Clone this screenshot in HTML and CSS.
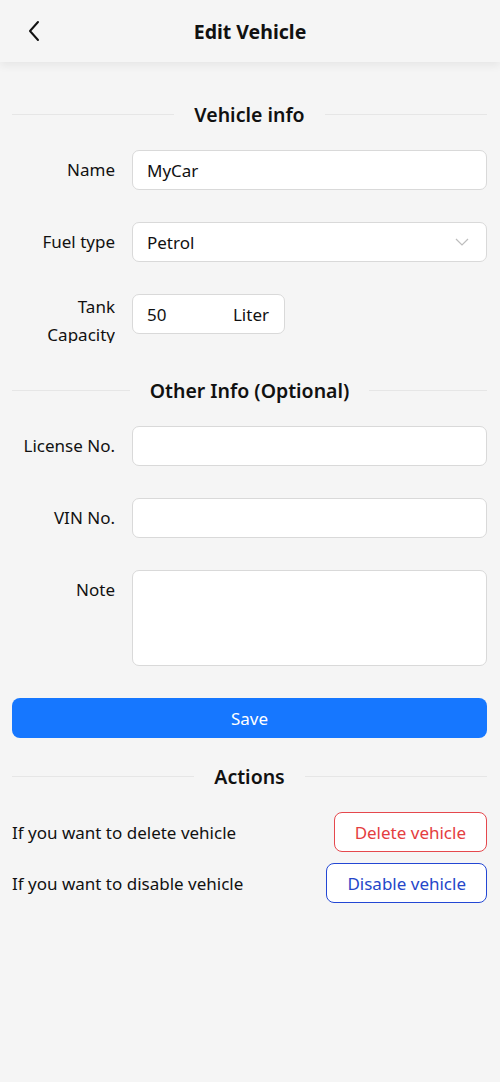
FILE: index.html
```html
<!DOCTYPE html>
<html lang="en">
<head>
<meta charset="utf-8">
<title>Edit Vehicle</title>
<link rel="stylesheet" href="styles.css">
</head>
<body>
<header class="topbar">
  <button class="back" aria-label="Back">
    <svg width="14" height="22" viewBox="0 0 14 22"><path d="M11 2 L3 11 L11 20" fill="none" stroke="#111" stroke-width="2" stroke-linecap="round" stroke-linejoin="round"/></svg>
  </button>
  <h1 class="title">Edit Vehicle</h1>
</header>

<main class="content">
  <div class="divider divider-first"><span>Vehicle info</span></div>

  <div class="row">
    <label class="label" for="name">Name</label>
    <input class="field" id="name" type="text" value="MyCar">
  </div>

  <div class="row">
    <label class="label">Fuel type</label>
    <div class="field select">
      <span>Petrol</span>
      <svg class="caret" width="14" height="8" viewBox="0 0 14 8"><path d="M1 1 L7 7 L13 1" fill="none" stroke="#bdbdbd" stroke-width="1.2"/></svg>
    </div>
  </div>

  <div class="row">
    <label class="label label-wrap" for="tank">Tank Capacity</label>
    <div class="field tank">
      <input id="tank" type="text" value="50">
      <span class="unit">Liter</span>
    </div>
  </div>

  <div class="divider divider-second"><span>Other Info (Optional)</span></div>

  <div class="row">
    <label class="label" for="lic">License No.</label>
    <input class="field" id="lic" type="text">
  </div>

  <div class="row">
    <label class="label" for="vin">VIN No.</label>
    <input class="field" id="vin" type="text">
  </div>

  <div class="row">
    <label class="label" for="note">Note</label>
    <textarea class="field note" id="note"></textarea>
  </div>

  <button class="save">Save</button>

  <div class="divider divider-actions"><span>Actions</span></div>

  <div class="action">
    <span class="action-text">If you want to delete vehicle</span>
    <button class="btn btn-danger">Delete vehicle</button>
  </div>
  <div class="action">
    <span class="action-text">If you want to disable vehicle</span>
    <button class="btn btn-blue">Disable vehicle</button>
  </div>
</main>
</body>
</html>
```

FILE: styles.css
```css
* { box-sizing: border-box; }
html, body {
  margin: 0;
  padding: 0;
  background: #f5f5f5;
  font-family: "Noto Sans", "Open Sans", sans-serif;
  color: #111;
}
body { min-height: 1082px; }

.topbar {
  height: 62px;
  position: relative;
  display: flex;
  align-items: center;
  justify-content: center;
  background: #f5f5f5;
  box-shadow: 0 4px 8px rgba(0,0,0,0.06);
}
.back {
  position: absolute;
  left: 27px;
  top: 20px;
  background: none;
  border: 0;
  padding: 0;
  width: 14px;
  height: 22px;
  display: block;
}
.title {
  margin: 0;
  font-size: 19.5px;
  font-weight: 700;
}

.content {
  padding: 38px 13px 0 12px;
}

.divider {
  display: flex;
  align-items: center;
  gap: 20px;
  height: 28px;
  font-size: 19.5px;
  font-weight: 600;
}
.divider::before, .divider::after {
  content: "";
  flex: 1;
  height: 1px;
  background: #e6e6e6;
}
.divider-first { margin-bottom: 22px; }
.divider-second { margin-top: 42px; margin-bottom: 22px; }
.divider-actions { margin-top: 24px; margin-bottom: 22px; }

.row {
  display: flex;
  align-items: flex-start;
  gap: 17px;
  margin-bottom: 32px;
}
.label {
  width: 103px;
  flex: none;
  height: 40px;
  line-height: 40px;
  text-align: right;
  font-size: 17px;
}
.label-wrap {
  line-height: 28px;
  height: 50px;
  margin-top: -1px;
  margin-bottom: -9px;
  overflow: hidden;
}

.field {
  flex: 1;
  min-width: 0;
  height: 40px;
  border: 1px solid #d9d9d9;
  border-radius: 7px;
  background: #fff;
  font-family: inherit;
  font-size: 17px;
  color: #111;
  padding: 0 14px;
  outline: none;
}
.select {
  display: flex;
  align-items: center;
  justify-content: space-between;
  padding-right: 17px;
}
.tank {
  flex: none;
  width: 153px;
  display: flex;
  align-items: center;
  justify-content: space-between;
  padding-right: 15px;
}
.tank input {
  border: 0;
  outline: none;
  width: 60px;
  padding: 0;
  font-family: inherit;
  font-size: 17px;
  color: #111;
  background: transparent;
}
.unit { font-size: 17px; }
.note {
  height: 96px;
  padding: 8px 14px;
  resize: none;
}

.save {
  display: block;
  width: 100%;
  height: 40px;
  margin-top: 32px;
  border: 0;
  border-radius: 8px;
  background: #1677ff;
  color: #fff;
  font-family: inherit;
  font-size: 17px;
}

.action {
  display: flex;
  align-items: center;
  justify-content: space-between;
  margin-bottom: 11px;
}
.action-text {
  font-size: 17px;
}
.btn {
  height: 40px;
  padding: 0 20px;
  border-radius: 8px;
  background: #fff;
  font-family: inherit;
  font-size: 17px;
}
.btn-danger {
  border: 1px solid #e5484d;
  color: #e43d40;
}
.btn-blue {
  border: 1px solid #2347d4;
  color: #2546c9;
}
```
